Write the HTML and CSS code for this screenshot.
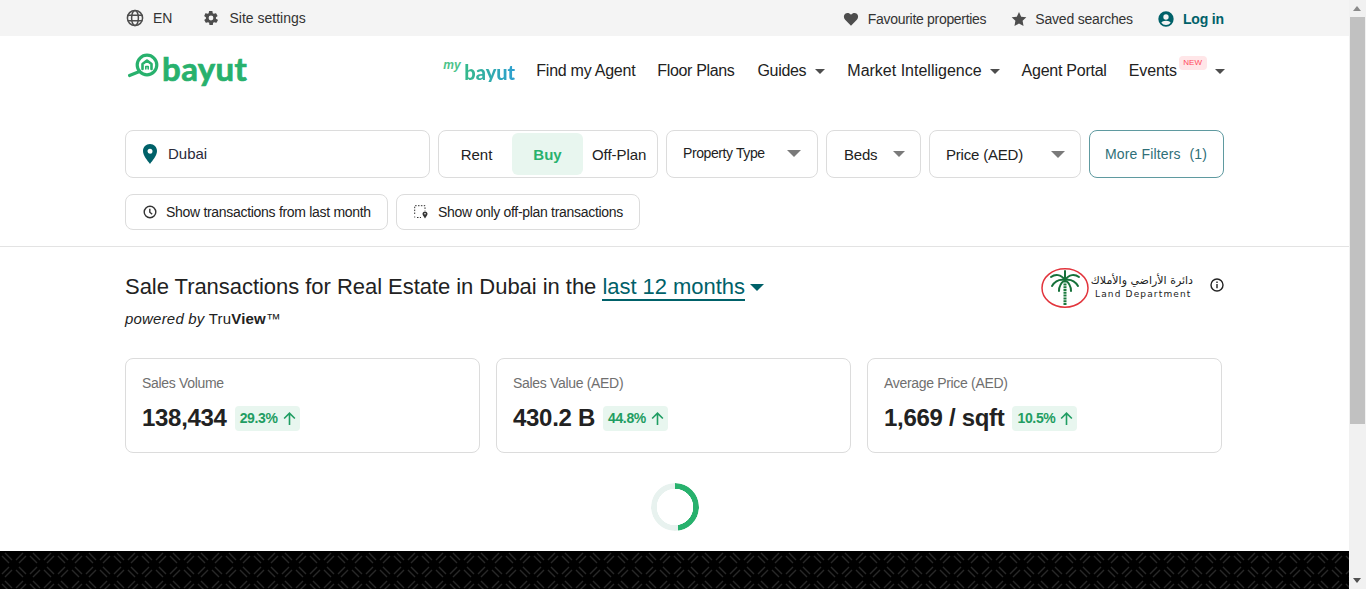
FILE: index.html
```html
<!DOCTYPE html>
<html lang="en">
<head>
<meta charset="utf-8">
<title>Bayut TruView</title>
<link rel="stylesheet" href="styles.css">
</head>
<body>
<div class="page">
  <div class="main">
    <div class="topbar">
      <div class="wrap topbar-in">
        <div class="top-group">
          <span class="top-item"><svg class="ic18" viewBox="0 0 18 18" fill="none" stroke="#4d4d4d" stroke-width="1.5"><circle cx="9" cy="9" r="7.6"/><ellipse cx="9" cy="9" rx="3.4" ry="7.6"/><path d="M1.8 6.3h14.4M1.8 11.7h14.4"/></svg><span>EN</span></span>
          <span class="top-item settings"><svg class="ic16" viewBox="0 0 24 24" fill="#4d4d4d"><path d="M19.4 13a7.6 7.6 0 0 0 0-2l2.2-1.7a.6.6 0 0 0 .1-.7l-2.1-3.6a.6.6 0 0 0-.7-.2l-2.6 1a7.6 7.6 0 0 0-1.7-1l-.4-2.8a.5.5 0 0 0-.5-.5h-4.2a.5.5 0 0 0-.5.5l-.4 2.8a8 8 0 0 0-1.7 1l-2.6-1a.6.6 0 0 0-.7.2L2.0 8.6a.5.5 0 0 0 .1.7L4.4 11a7.6 7.6 0 0 0 0 2l-2.2 1.7a.6.6 0 0 0-.1.7l2.1 3.6c.1.2.4.3.7.2l2.6-1c.5.4 1.100.7 1.700 1l.4 2.800c0 .3.2.5.5.5h4.200c.3 0 .5-.2.5-.5l.4-2.800a8 8 0 0 0 1.700-1l2.600 1c.3.1.5 0 .7-.2l2.100-3.600a.6.6 0 0 0-.1-.7zM12 15.600a3.600 3.600 0 1 1 0-7.200 3.600 3.600 0 0 1 0 7.200z"/></svg><span>Site settings</span></span>
        </div>
        <div class="top-group right">
          <span class="top-item tight"><svg class="ic16" viewBox="0 0 24 24" fill="#4d4d4d"><path d="M12 22 3.200 13C.6 10.300.8 6.300 3.300 4.200c2.500-2 6.200-1.600 8.700 1.300 2.500-2.900 6.200-3.300 8.700-1.300 2.500 2.100 2.700 6.100.1 8.800z"/></svg><span>Favourite properties</span></span>
          <span class="top-item tight2"><svg class="ic16" viewBox="0 0 24 24" fill="#4d4d4d"><path d="m12 1.500 3.300 7 7.700 1-5.600 5.300 1.400 7.700-6.800-3.700-6.800 3.700 1.400-7.700L1 9.500l7.700-1z"/></svg><span>Saved searches</span></span>
          <span class="top-item login"><svg class="ic16" viewBox="0 0 24 24" fill="#006169"><path d="M12 .5a11.500 11.500 0 1 0 0 23 11.500 11.500 0 0 0 0-23zm0 4.500a4 4 0 1 1 0 8 4 4 0 0 1 0-8zm0 16a8.800 8.800 0 0 1-7-3.400c.8-1.700 3.600-2.900 7-2.900s6.200 1.200 7 2.900a8.800 8.800 0 0 1-7 3.400z"/></svg><span>Log in</span></span>
        </div>
      </div>
    </div>

    <div class="wrap nav">
      <div class="logo">
        <svg class="logo-mark" viewBox="0 0 34 30" fill="none" stroke="#28b16d" stroke-width="3.200" stroke-linecap="round" stroke-linejoin="round"><circle cx="20" cy="12" r="9.800"/><path d="M12.500 18.500 2.500 22.500"/><path d="M15.500 16v-5l4.500-3.500 4.500 3.500v5" stroke-width="2.600"/><path d="M18.800 16v-2.500h2.400V16" stroke-width="1.600"/></svg>
        <span class="logo-text">bayut</span>
      </div>
      <div class="nav-links">
        <span class="mybayut"><span class="my">my</span><span class="mb">bayut</span></span>
        <span class="nav-link l-agent">Find my Agent</span>
        <span class="nav-link l-floor">Floor Plans</span>
        <span class="nav-link l-guides">Guides<i class="caret"></i></span>
        <span class="nav-link l-market">Market Intelligence<i class="caret"></i></span>
        <span class="nav-link l-portal">Agent Portal</span>
        <span class="nav-link events">Events<em class="new">NEW</em><i class="caret"></i></span>
      </div>
    </div>

    <div class="wrap filters">
      <div class="box location"><svg class="pin" viewBox="0 0 14 20"><path fill="#006169" fill-rule="evenodd" d="M7 0C3 0 0 3 0 7c0 4.500 4.500 9.500 7 13 2.500-3.500 7-8.500 7-13 0-4-3-7-7-7zm0 4.700a2.500 2.500 0 1 1 0 5 2.500 2.500 0 0 1 0-5z"/></svg><span class="loc-text">Dubai</span></div>
      <div class="box segment"><span class="seg s-rent">Rent</span><span class="seg s-buy">Buy</span><span class="seg s-off">Off-Plan</span></div>
      <div class="box select w152 small"><span class="sel-prop">Property Type</span><i class="tri big"></i></div>
      <div class="box select w95"><span class="sel-beds">Beds</span><i class="tri"></i></div>
      <div class="box select w152"><span class="sel-price">Price (AED)</span><i class="tri big"></i></div>
      <div class="box more"><span>More Filters</span><span>(1)</span></div>
    </div>

    <div class="wrap chips">
      <span class="chip c1"><svg class="ic14" viewBox="0 0 14 14" fill="none" stroke="#333" stroke-width="1.400"><circle cx="7" cy="7" r="5.800"/><path d="M6.800 3.800v3.400l2.400 2"/></svg>Show transactions from last month</span>
      <span class="chip c2"><svg class="ic14" viewBox="0 0 14 14" fill="none"><path d="M.7 9V.7H11v5M.7 11.500v1M3 12.500h4" stroke="#333" stroke-dasharray="1.500 1.400"/><path fill="#333" d="M11 6.500c-1.500 0-2.500 1-2.500 2.300 0 1.500 1.500 3 2.500 4.700 1-1.700 2.500-3.200 2.500-4.700 0-1.300-1-2.300-2.500-2.300z"/><circle cx="11" cy="8.800" r=".8" fill="#fff"/></svg>Show only off-plan transactions</span>
    </div>

    <hr class="divider">

    <div class="wrap title-row">
      <div>
        <h1 class="title">Sale Transactions for Real Estate in Dubai in the <span class="period">last 12 months</span><i class="tri teal"></i></h1>
        <p class="powered"><em>powered by</em> Tru<b>View</b>™</p>
      </div>
      <div class="dld">
        <svg class="dld-mark" viewBox="0 0 50 40"><ellipse cx="24" cy="20" rx="23" ry="19.200" fill="#fff" stroke="#e2343c" stroke-width="1.500"/><path d="M24 37V10" stroke="#1b7a3e" stroke-width="3" stroke-dasharray="2 .8"/><g fill="none" stroke="#16713a" stroke-width="2" stroke-linecap="round"><path d="M24 12C20 6 14 6 10 9M24 12c-5-1-10 1-13 6M24 12c-3 2-6 6-6 11M24 12c4-6 10-6 14-3M24 12c5-1 10 1 13 6M24 12c3 2 6 6 6 11M24 12V3"/></g></svg>
        <div class="dld-text"><span class="ar" lang="ar" dir="rtl">دائرة الأراضي والأملاك</span><span class="en">Land Department</span></div>
        <svg class="ic14 info" viewBox="0 0 14 14" fill="none" stroke="#222" stroke-width="1.400"><circle cx="7" cy="7" r="6"/><path d="M7 6v4.200M7 3.600v1.300"/></svg>
      </div>
    </div>

    <div class="wrap cards">
      <div class="card"><div class="card-label">Sales Volume</div><div class="card-row"><span class="num">138,434</span><span class="delta">29.3%<svg class="arrow" viewBox="0 0 14 14" fill="none" stroke="#1f9d62" stroke-width="1.500"><path d="M7 13V2M2 7l5-5 5 5"/></svg></span></div></div>
      <div class="card"><div class="card-label">Sales Value (AED)</div><div class="card-row"><span class="num">430.2 B</span><span class="delta">44.8%<svg class="arrow" viewBox="0 0 14 14" fill="none" stroke="#1f9d62" stroke-width="1.500"><path d="M7 13V2M2 7l5-5 5 5"/></svg></span></div></div>
      <div class="card"><div class="card-label">Average Price (AED)</div><div class="card-row"><span class="num">1,669 / sqft</span><span class="delta">10.5%<svg class="arrow" viewBox="0 0 14 14" fill="none" stroke="#1f9d62" stroke-width="1.500"><path d="M7 13V2M2 7l5-5 5 5"/></svg></span></div></div>
    </div>

    <div class="spinner-row"><div class="spinner"></div></div>

    <svg class="footer" xmlns="http://www.w3.org/2000/svg">
      <defs>
        <pattern id="weave" width="28" height="28" patternUnits="userSpaceOnUse">
          <rect width="28" height="28" fill="#000"/>
          <g stroke="#282828" stroke-width="1.400" fill="none">
            <path d="M2 5l7 7M5 2l7 7"/>
            <path d="M26 5l-7 7M23 2l-7 7"/>
            <path d="M9 16l-7 7M12 19l-7 7"/>
            <path d="M16 19l7 7M19 16l7 7"/>
          </g>
        </pattern>
      </defs>
      <rect width="100%" height="100%" fill="url(#weave)"/>
    </svg>
  </div>

  <div class="scrollbar">
    <span class="sb-up"></span>
    <span class="sb-thumb"></span>
    <span class="sb-down"></span>
  </div>
</div>
</body>
</html>
```

FILE: styles.css
```css
* { box-sizing: border-box; }
html, body { margin: 0; height: 100%; overflow: hidden; background: #fff; }
body { font-family: "Liberation Sans", Arial, sans-serif; color: #222; }
.page { display: flex; width: 1366px; height: 589px; overflow: hidden; }
.main { width: 1349px; height: 589px; display: flex; flex-direction: column; overflow: hidden; }
.wrap { width: 1099px; margin-left: 125px; }

.topbar { height: 36px; background: #f4f4f4; flex: none; font-size: 14px; color: #333; }
.topbar-in { display: flex; justify-content: space-between; align-items: center; height: 36px; }
.top-group { display: flex; align-items: center; }
.top-group.right { gap: 25px; margin-top: 2px; }
.top-item { display: inline-flex; align-items: center; gap: 9px; }
.settings { margin-left: 31px; gap: 10px; }
.tight { gap: 9px; letter-spacing: -.3px; }
.tight2 { gap: 8px; letter-spacing: -.2px; }
.login { color: #006169; font-weight: 700; gap: 9px; letter-spacing: -.15px; }
.ic18 { width: 18px; height: 18px; margin-left: 1px; flex: none; }
.ic16 { width: 16px; height: 16px; flex: none; }
.ic14 { width: 14px; height: 14px; flex: none; }

.nav { display: flex; justify-content: space-between; align-items: flex-start; height: 94px; flex: none; }
.logo { display: flex; align-items: center; margin-top: 16px; margin-left: 2px; height: 34px; }
.logo-mark { width: 34px; height: 30px; margin-top: -2px; }
.logo-text { font-family: Lato, sans-serif; font-weight: 700; font-size: 33px; line-height: 34px; color: #28b16d; margin-left: 1px; margin-top: -2px; letter-spacing: .4px; -webkit-text-stroke: .7px #28b16d; }
.nav-links { display: flex; align-items: center; height: 70px; font-size: 16px; color: #222; margin-right: -1px; }
.nav-link { display: inline-flex; align-items: center; margin-left: 22px; position: relative; }
.l-agent { letter-spacing: -.25px; }
.l-floor { letter-spacing: -.35px; }
.l-guides { letter-spacing: -.3px; margin-left: 23px; }
.l-portal { letter-spacing: -.25px; }
.mybayut { position: relative; display: inline-block; width: 71px; height: 22px; margin-top: 2px; }
.my { position: absolute; left: 0; top: -3px; font: italic 700 12px "Liberation Sans", sans-serif; color: #4cc38a; }
.mb { position: absolute; left: 21px; top: 1px; font: 900 20px/20px Lato, sans-serif; background: linear-gradient(90deg, #35b98a, #2e9fd0); -webkit-background-clip: text; background-clip: text; color: transparent; }
.caret { display: inline-block; margin-left: 9px; border: 5px solid transparent; border-top-color: #4d4d4d; border-bottom-width: 0; }
.new { position: absolute; left: 50px; top: -6px; width: 28px; height: 14px; border-radius: 4px; background: #ffe6e8; color: #ff4a5c; font: 400 8px/13px "Liberation Sans", sans-serif; text-align: center; letter-spacing: 0; }
.events { margin-left: 22px; letter-spacing: -.1px; }
.events .caret { margin-left: 38px; }
.l-market .caret { margin-left: 8px; }

.filters { display: flex; gap: 8px; height: 48px; flex: none; }
.box { height: 48px; border: 1px solid #dcdcdc; border-radius: 8px; display: flex; align-items: center; font-size: 15px; color: #222; background: #fff; }
.location { width: 305px; padding-left: 17px; gap: 11px; font-size: 15px; color: #2a2a3a; }
.loc-text { margin-top: -1px; }
.pin { width: 14px; height: 20px; }
.segment { width: 220px; padding: 2px; position: relative; }
.seg { display: flex; align-items: center; justify-content: center; height: 42px; }
.s-rent { width: 71px; margin-top: 1px; }
.s-buy { width: 71px; background: #e8f6ef; border-radius: 6px; color: #28b16d; font-weight: 700; }
.s-off { margin-left: 9px; margin-top: 1px; white-space: nowrap; letter-spacing: -.05px; }
.select { justify-content: space-between; padding-left: 16px; padding-right: 15px; }
.w152 { width: 152px; }
.w95 { width: 95px; }
.small { font-size: 14px; padding-right: 16px; }
.sel-prop { letter-spacing: -.4px; margin-top: -2px; }
.sel-beds { letter-spacing: -.2px; margin-left: 1px; }
.sel-price { letter-spacing: -.2px; }
.tri { display: inline-block; border: 6px solid transparent; border-top-color: #7a7a7a; border-bottom-width: 0; }
.tri.big { border-width: 7px 7.500px 0; }
.small .tri { margin-top: -2px; }
.more { width: 135px; border-color: #5f9aa0; color: #2f6f78; justify-content: space-between; padding: 0 16px 0 15px; font-size: 14px; letter-spacing: .15px; }

.chips { display: flex; gap: 8px; margin-top: 16px; flex: none; }
.chip { display: inline-flex; align-items: center; height: 36px; border: 1px solid #dcdcdc; border-radius: 8px; font-size: 14px; color: #222; gap: 9px; letter-spacing: -.3px; }
.c1 { width: 263px; padding-left: 17px; }
.c2 { width: 244px; padding-left: 17px; gap: 10px; }

.divider { border: 0; border-top: 1px solid #e3e3e3; margin: 16px 0 0; width: 1349px; height: 1px; flex: none; }

.title-row { display: flex; justify-content: space-between; margin-top: 25px; flex: none; height: 86px; }
.title { margin: 0; font-weight: 400; font-size: 22px; line-height: 30px; color: #222; letter-spacing: -.04px; white-space: nowrap; }
.period { color: #006169; border-bottom: 2px solid #006169; }
.tri.teal { border-width: 7px 7px 0; border-top-color: #006169; margin-left: 5px; vertical-align: 3px; }
.powered { margin: 8px 0 0; font-size: 15px; line-height: 18px; color: #222; letter-spacing: .2px; }
.dld { display: flex; align-items: center; height: 40px; margin-top: -4px; width: 185px; padding-left: 2px; }
.dld-mark { width: 50px; height: 40px; flex: none; }
.dld-text { display: flex; flex-direction: column; width: 100px; margin-left: 4px; color: #222; }
.ar { font: 400 11px/13px "DejaVu Sans", sans-serif; text-align: right; white-space: nowrap; margin-top: -3px; margin-right: 2px; }
.en { font: 400 9px/11px "DejaVu Sans", sans-serif; letter-spacing: 1.150px; white-space: nowrap; margin-top: 2px; }
.info { margin-left: 15px; margin-top: -7px; }

.cards { display: flex; gap: 16px; flex: none; }
.card { width: 355px; height: 95px; border: 1px solid #dcdcdc; border-radius: 8px; padding: 16px 16px 0; }
.card-label { font-size: 14px; line-height: 16px; color: #6f6f6f; letter-spacing: -.32px; }
.card-row { display: flex; align-items: center; margin-top: 14px; height: 26px; }
.num { font-size: 24px; font-weight: 700; color: #222; white-space: nowrap; letter-spacing: -.3px; }
.delta { display: inline-flex; align-items: center; gap: 4px; height: 25px; margin-left: 8px; padding: 0 3px 0 5px; background: #e8f6ef; border-radius: 4px; font-size: 14px; font-weight: 700; color: #1f9d62; letter-spacing: -.35px; }
.arrow { width: 15px; height: 15px; }

.spinner-row { display: flex; justify-content: center; height: 98px; padding-top: 30px; flex: none; }
.spinner { width: 48px; height: 48px; border-radius: 50%; background: conic-gradient(#28b16d 0 172deg, #e8f2ef 172deg 360deg); -webkit-mask: radial-gradient(circle, transparent 18px, #000 18.500px); mask: radial-gradient(circle, transparent 18px, #000 18.500px); }

.footer { width: 1349px; height: 38px; display: block; flex: none; }

.scrollbar { width: 17px; height: 589px; background: #f1f1f1; position: relative; flex: none; }
.sb-thumb { position: absolute; left: 1px; top: 17px; width: 15px; height: 407px; background: #c1c1c1; }
.sb-up, .sb-down { position: absolute; left: 4px; width: 0; height: 0; border: 4.500px solid transparent; }
.sb-up { top: 6px; border-top-width: 0; border-bottom: 5px solid #8a8a8a; }
.sb-down { bottom: 6px; border-bottom-width: 0; border-top: 5px solid #505050; }
```
